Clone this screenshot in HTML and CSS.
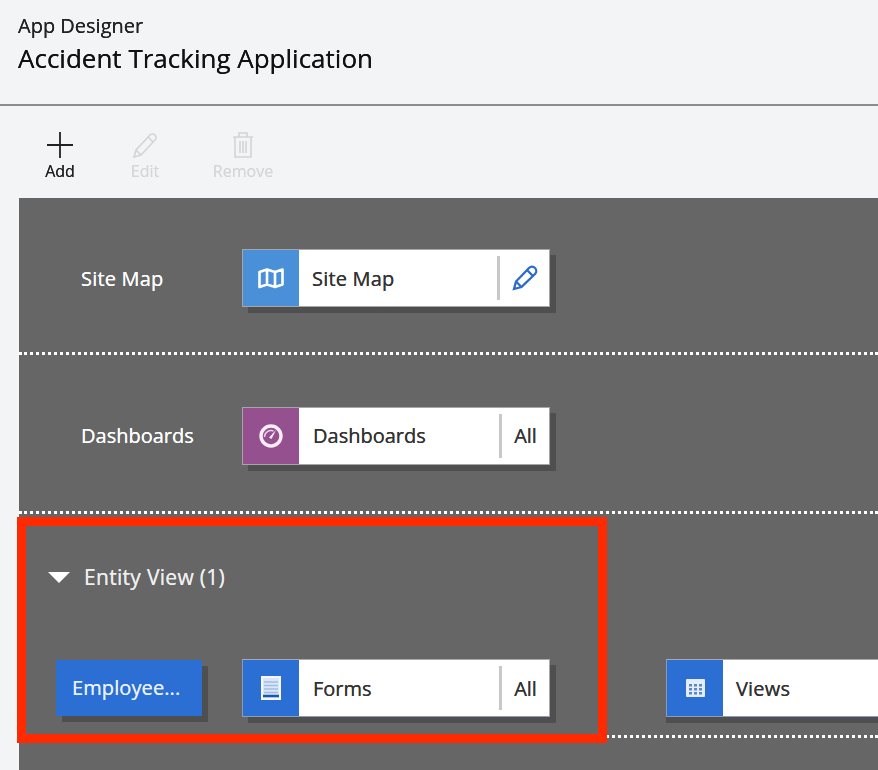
FILE: index.html
```html
<!DOCTYPE html>
<html lang="en">
  <head>
    <meta charset="UTF-8" />
    <meta name="viewport" content="width=device-width, initial-scale=1.0" />
    <title>App Designer</title>
    <link rel="stylesheet" href="styles.css">
  </head>
  <body>
    <header class="title-bar">
      <div class="title-small">App Designer</div>
      <h1>Accident Tracking Application</h1>
    </header>

    <div class="toolbar">
      <div class="tool tool-add">
        <svg width="26" height="26" viewBox="0 0 26 26"><path d="M13 0v26M0 13h26" fill="none" stroke="#222" stroke-width="1.800"/></svg>
        <span>Add</span>
      </div>
      <div class="tool tool-edit disabled">
        <svg width="26" height="26" viewBox="0 0 26 26"><path d="M2 25l2-7L18 3a2.500 2.500 0 0 1 5 5L9 23zM4 18l5 5M16 5l5 5" fill="none" stroke="#d4d4d6" stroke-width="1.600"/></svg>
        <span>Edit</span>
      </div>
      <div class="tool tool-remove disabled">
        <svg width="22" height="26" viewBox="0 0 22 26"><path d="M1 5h20M7 5V1h8v4M3 5v20h16V5M8 9v12M11 9v12M14 9v12" fill="none" stroke="#d4d4d6" stroke-width="1.600"/></svg>
        <span>Remove</span>
      </div>
    </div>

    <main class="designer">
      <section class="row row-sitemap">
        <div class="row-label">Site Map</div>
        <div class="card">
          <div class="card-icon light-blue">
            <svg width="26" height="21" viewBox="0 0 26 21"><path d="M1.500 4l7.500-2.500 8 2.500 7.500-2.500v15L17 19l-8-2.500L1.500 19zM9 1.500v15M17 4v15" fill="none" stroke="#fff" stroke-width="2.600" stroke-linejoin="round"/></svg>
          </div>
          <div class="card-name">Site Map</div>
          <div class="card-side card-side-wide">
            <svg width="26" height="26" viewBox="0 0 26 26"><path d="M2 24l2-7.500L17 3a3 3 0 0 1 6 6L9.500 22zM4 16.500l5.500 5.500M15 5l6 6" fill="none" stroke="#2b6cc9" stroke-width="2.300"/></svg>
          </div>
        </div>
      </section>

      <section class="row row-dash">
        <div class="row-label">Dashboards</div>
        <div class="card">
          <div class="card-icon purple">
            <svg width="24" height="24" viewBox="0 0 24 24"><circle cx="12" cy="12" r="10" fill="none" stroke="#f9edf7" stroke-width="3.400"/><path d="M5.500 13a6.500 6.500 0 0 1 9-6" fill="none" stroke="#ecd2e7" stroke-width="1.400"/><path d="M10 13.500l7-7.500-4.500 9z" fill="#f9edf7"/></svg>
          </div>
          <div class="card-name card-name-dash">Dashboards</div>
          <div class="card-side">All</div>
        </div>
      </section>

      <section class="row-entity">
        <div class="entity-head">
          <span class="caret"></span>
          <span class="entity-title">Entity View (1)</span>
        </div>
        <div class="entity-cards">
          <div class="entity-button">Employee...</div>
          <div class="card card-blue">
            <div class="card-icon blue">
              <svg width="20" height="24" viewBox="0 0 20 24"><rect x="1" y="1" width="18" height="22" fill="#d9e6f9" stroke="#f4f8fe" stroke-width="2"/><path d="M3 6h14M3 9.500h14M3 13h14M3 16.500h14" stroke="#a3bde4" stroke-width="1.500"/><path d="M2 20h16" stroke="#1d57ad" stroke-width="2.500"/></svg>
            </div>
            <div class="card-name card-name-dash">Forms</div>
            <div class="card-side">All</div>
          </div>
          <div class="card card-blue card-views">
            <div class="card-icon blue">
              <svg width="19" height="18" viewBox="0 0 19 18"><rect width="19" height="18" rx="1" fill="#e3edfb"/><g fill="#5a86cb"><rect x="3" y="5" width="3" height="2.500"/><rect x="8" y="5" width="3" height="2.500"/><rect x="13" y="5" width="3" height="2.500"/><rect x="3" y="9" width="3" height="2.500"/><rect x="8" y="9" width="3" height="2.500"/><rect x="13" y="9" width="3" height="2.500"/><rect x="3" y="13" width="3" height="2.500"/><rect x="8" y="13" width="3" height="2.500"/><rect x="13" y="13" width="3" height="2.500"/></g></svg>
            </div>
            <div class="card-name">Views</div>
          </div>
        </div>
      </section>

      <div class="highlight"></div>
    </main>
  </body>
</html>
```

FILE: styles.css
```css
html,
body {
  margin: 0;
  height: 770px;
  overflow: hidden;
}
body {
  font-family: "Open Sans", "Noto Sans", sans-serif;
  background-color: #f3f4f6;
  color: #222;
  filter: blur(0.35px);
  text-shadow: 0 0 0.6px currentColor;
}
.title-bar {
  height: 91px;
  padding: 13px 0 0 18px;
  border-bottom: 2px solid #8c8c8c;
}
.title-small {
  font-size: 20px;
  line-height: 26px;
  color: #222;
}
h1 {
  margin: 0;
  font-size: 26px;
  font-weight: 400;
  line-height: 39px;
  color: #111;
}
.toolbar {
  height: 92px;
  display: flex;
  padding-left: 45px;
  padding-top: 26px;
  box-sizing: border-box;
}
.tool {
  display: flex;
  flex-direction: column;
  align-items: center;
  font-size: 16px;
  line-height: 20px;
  color: #222;
}
.tool svg {
  margin-bottom: 3px;
}
.tool-add {
  width: 30px;
}
.tool-edit {
  width: 30px;
  margin-left: 55px;
}
.tool-remove {
  width: 62px;
  margin-left: 52px;
}
.disabled {
  color: #d6d6d8;
}
.designer {
  margin-left: 19px;
  height: 572px;
  background-color: #666;
  position: relative;
}
.row {
  display: flex;
  align-items: center;
  box-sizing: border-box;
  border-bottom: 3px dotted #fff;
}
.row-sitemap {
  height: 157px;
  padding-top: 6px;
}
.row-dash {
  height: 159px;
  padding-top: 5px;
}
.row-label {
  width: 223px;
  padding-left: 62px;
  box-sizing: border-box;
  color: #fff;
  font-size: 20px;
}
.row-sitemap .row-label {
  letter-spacing: 0.2px;
}
.card {
  width: 308px;
  height: 58px;
  display: flex;
  align-items: center;
  background-color: #fff;
  border: 1px solid #a6a6a6;
  box-sizing: border-box;
  box-shadow: 6px 6px 0 #4f4f4f;
  color: #333;
  font-size: 20px;
  flex: none;
}
.card-blue {
  border-color: #8d9cb6;
  border-right-color: #aaa;
  border-top-color: #aaa;
}
.card-icon {
  width: 56px;
  height: 56px;
  display: flex;
  align-items: center;
  justify-content: center;
  flex: none;
}
.light-blue {
  background-color: #4a90d9;
}
.purple {
  background-color: #94508f;
}
.blue {
  background-color: #2b6fd4;
}
.card-name {
  flex: 1;
  padding-left: 13px;
  letter-spacing: 0.2px;
}
.card-name-dash {
  padding-left: 14px;
  letter-spacing: 0;
}
.card-side {
  width: 50px;
  height: 44px;
  border-left: 3px solid #c8c8c8;
  box-sizing: border-box;
  font-size: 20px;
  display: flex;
  align-items: center;
  justify-content: center;
}
.card-side-wide {
  width: 52px;
}
.row-entity {
  height: 221px;
  border-bottom: 3px dotted #fff;
}
.entity-head {
  display: flex;
  align-items: center;
  padding: 48px 0 0 29px;
  height: 30px;
  color: #eee;
}
.caret {
  width: 0;
  height: 0;
  border-left: 11px solid transparent;
  border-right: 11px solid transparent;
  border-top: 11px solid #fff;
  margin-right: 14px;
}
.entity-title {
  font-size: 21px;
  letter-spacing: 0.3px;
}
.entity-cards {
  display: flex;
  align-items: center;
  margin-top: 67px;
  padding-left: 37px;
}
.entity-button {
  width: 146px;
  height: 56px;
  background-color: #2b6fd4;
  box-shadow: 6px 6px 0 #4f4f4f;
  color: #e8f0fc;
  font-size: 20px;
  letter-spacing: 0.1px;
  line-height: 56px;
  padding-left: 16px;
  box-sizing: border-box;
  margin-right: 40px;
  flex: none;
}
.card-views {
  width: 212px;
  margin-left: 116px;
  border-right: 0;
  box-shadow: 0 6px 0 #4f4f4f;
}
.highlight {
  position: absolute;
  left: -2px;
  top: 319px;
  width: 590px;
  height: 226px;
  border: 9px solid #ff2a00;
  box-sizing: border-box;
}
```
